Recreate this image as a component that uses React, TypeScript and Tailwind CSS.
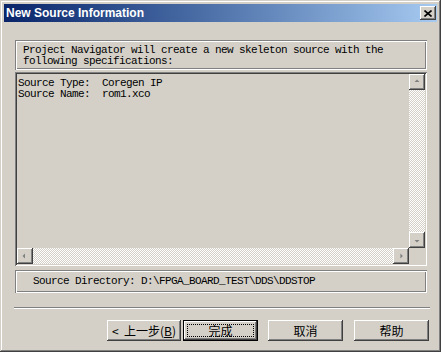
import React from 'react';

const raised = 'shadow-[inset_-1px_-1px_#404040,inset_1px_1px_#ffffff,inset_-2px_-2px_#808080,inset_2px_2px_#d4d0c8]';
const etched = 'shadow-[inset_1px_1px_#808080,inset_-1px_-1px_#ffffff,inset_2px_2px_#ffffff,inset_-2px_-2px_#808080]';
const sunken = 'shadow-[inset_1px_1px_#808080,inset_-1px_-1px_#ffffff,inset_2px_2px_#404040,inset_-2px_-2px_#d4d0c8]';
const track = 'bg-[repeating-conic-gradient(#ffffff_0_25%,#d4d0c8_0_50%)] bg-[length:2px_2px]';

function Arrow({ dir }: { dir: 'up' | 'down' | 'left' | 'right' }) {
  const pts = {
    up: '4,6 8,2 12,6',
    down: '4,6 12,6 8,10',
    left: '6,4 6,12 2,8',
    right: '5,4 9,8 5,12',
  }[dir];
  const side = dir === 'left' || dir === 'right';
  return (
    <div className={`w-[16px] h-[16px] bg-[#d4d0c8] flex items-center justify-center ${raised}`}>
      <svg width={side ? 8 : 10} height={side ? 10 : 8} viewBox={side ? '0 0 12 16' : '0 0 16 12'}>
        <polygon points={pts} fill="#808080" />
      </svg>
    </div>
  );
}

function Button({ children, def = false, w = 'w-[75px]' }: { children: React.ReactNode; def?: boolean; w?: string }) {
  return (
    <div className={`${w} h-[21px] ${def ? 'border border-black' : ''}`}>
      <div className={`w-full h-full bg-[#d4d0c8] flex items-center justify-center ${raised} ${def ? 'p-[3px]' : ''}`}>
        {def ? (
          <div className="w-full h-full border border-dotted border-black flex items-center justify-center">{children}</div>
        ) : (
          children
        )}
      </div>
    </div>
  );
}

export default function App() {
  const mono = "font-['Liberation_Mono',monospace] text-[11px] tracking-[-0.6px] leading-[11px] text-black whitespace-pre";
  return (
    <div className="w-[441px] h-[352px] bg-[#d4d0c8] p-[4px] flex flex-col shadow-[inset_-1px_-1px_#404040,inset_1px_1px_#d4d0c8,inset_-2px_-2px_#808080,inset_2px_2px_#ffffff]">
      {/* title bar */}
      <div className="h-[18px] flex items-center justify-between bg-linear-to-r from-[#0a246a] to-[#a6caf0]">
        <span className="pl-[2px] text-white font-bold text-[12px] font-['Liberation_Sans',Arial,sans-serif]">New Source Information</span>
        <div className={`w-[16px] h-[14px] mr-[1px] bg-[#d4d0c8] flex items-center justify-center ${raised}`}>
          <svg width="8" height="7" viewBox="0 0 8 7">
            <path d="M0.5 0.5 L7.5 6.5 M7.5 0.5 L0.5 6.5" stroke="#000" strokeWidth="1.6" />
          </svg>
        </div>
      </div>

      <div className="flex-1 flex flex-col pl-[11px] pr-[10px] pt-[18px]">
        {/* info */}
        <div className={`h-[30px] pl-[8px] pt-[5px] ${etched} ${mono}`}>
          {'Project Navigator will create a new skeleton source with the\nfollowing specifications:'}
        </div>

        {/* text area */}
        <div className={`mt-[2px] h-[194px] p-[2px] flex ${sunken}`}>
          <div className="flex-1 flex flex-col">
            <div className={`flex-1 pl-[1px] pt-[4px] ${mono}`}>{'Source Type:  Coregen IP\nSource Name:  rom1.xco'}</div>
            <div className="h-[16px] flex">
              <Arrow dir="left" />
              <div className={`flex-1 ${track}`} />
              <Arrow dir="right" />
            </div>
          </div>
          <div className="w-[16px] flex flex-col">
            <Arrow dir="up" />
            <div className={`flex-1 ${track}`} />
            <Arrow dir="down" />
            <div className="h-[16px] bg-[#d4d0c8]" />
          </div>
        </div>

        {/* directory */}
        <div className={`mt-[4px] h-[23px] pl-[18px] flex items-center ${etched} ${mono}`}>
          {'Source Directory: D:\\FPGA_BOARD_TEST\\DDS\\DDSTOP'}
        </div>

        {/* separator */}
        <div className="mt-[14px] -ml-[1px] -mr-[3px] h-[2px] border-t border-[#808080] border-b border-b-white" />

        {/* buttons */}
        <div className="mt-[11px] flex justify-end font-['Noto_Sans_CJK_SC',sans-serif] text-[12px] text-black -mr-[2px]">
          <Button w="w-[74px]">
            <span className="whitespace-pre">{'<  上一步('}<u>B</u>)</span>
          </Button>
          <div className="w-[2px]" />
          <Button def>完成</Button>
          <div className="w-[10px]" />
          <Button>取消</Button>
          <div className="w-[11px]" />
          <Button>帮助</Button>
        </div>
      </div>
    </div>
  );
}
